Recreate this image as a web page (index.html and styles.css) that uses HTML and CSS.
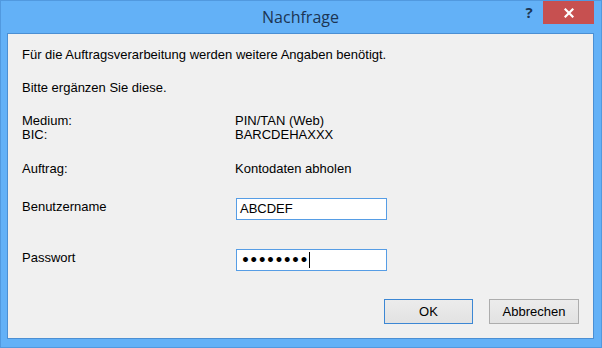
FILE: index.html
```html
<!DOCTYPE html>
<html lang="de">
<head>
<meta charset="utf-8">
<title>Nachfrage</title>
<link rel="stylesheet" href="styles.css">
</head>
<body>
<div class="window">
  <div class="titlebar">
    <div class="spacer"></div>
    <div class="title">Nachfrage</div>
    <div class="controls">
      <div class="help">?</div>
      <div class="close">
        <svg width="10" height="10" viewBox="0 0 10 10"><path d="M1.5 1.5 L8.5 8.5 M8.5 1.5 L1.5 8.5" stroke="#fff" stroke-width="2.2" stroke-linecap="square"/></svg>
      </div>
    </div>
  </div>
  <div class="client">
    <p class="line">Für die Auftragsverarbeitung werden weitere Angaben benötigt.</p>
    <p class="line gap">Bitte ergänzen Sie diese.</p>
    <div class="info gap">
      <span>Medium:</span><span>PIN/TAN (Web)</span>
      <span>BIC:</span><span>BARCDEHAXXX</span>
    </div>
    <div class="info gap2">
      <span>Auftrag:</span><span>Kontodaten abholen</span>
    </div>
    <div class="field first">
      <span class="label">Benutzername</span>
      <div class="input">ABCDEF</div>
    </div>
    <div class="field second">
      <span class="label">Passwort</span>
      <div class="input pw"><span class="dots">••••••••</span><span class="caret"></span></div>
    </div>
    <div class="buttons">
      <div class="btn default">OK</div>
      <div class="btn cancel">Abbrechen</div>
    </div>
  </div>
</div>
</body>
</html>
```
FILE: styles.css
```css
* { box-sizing: border-box; }
html, body { margin: 0; padding: 0; }
body {
  width: 602px;
  height: 348px;
  overflow: hidden;
  font-family: "Liberation Sans", Arial, sans-serif;
  font-size: 13px;
  color: #000;
}
.window {
  width: 602px;
  height: 348px;
  background: #63b1f7;
  border: 1px solid #5199df;
  display: flex;
  flex-direction: column;
}
.titlebar {
  height: 32px;
  display: grid;
  grid-template-columns: 1fr auto 1fr;
  padding-right: 7px;
}
.title {
  font-family: "Open Sans", "Noto Sans", sans-serif;
  font-size: 16px;
  color: #1c3553;
  padding-top: 5px;
  line-height: 22px;
  padding-left: 6px;
}
.controls {
  display: flex;
  justify-content: flex-end;
  align-items: flex-start;
}
.help {
  width: 30px;
  height: 23px;
  font-family: "Open Sans", "Noto Sans", sans-serif;
  font-weight: bold;
  font-size: 15px;
  line-height: 23px;
  color: #1c3553;
  text-align: center;
  padding-left: 2px;
}
.close {
  width: 51px;
  height: 23px;
  background: #c75050;
  display: flex;
  align-items: center;
  justify-content: center;
}
.client {
  flex: 1;
  margin: 0 7px 8px 6px;
  border: 1px solid #4b8fd3;
  background: #f0f0f0;
  padding: 14px 14px 0 14px;
  display: flex;
  flex-direction: column;
}
.line {
  margin: 0;
  line-height: 14px;
}
.gap { margin-top: 19px; }
.gap2 { margin-top: 20px; }
.info {
  display: grid;
  grid-template-columns: 213px 1fr;
  line-height: 14px;
}
.field {
  display: grid;
  grid-template-columns: 214px 151px;
  height: 22px;
}
.field.first { margin-top: 22px; }
.field.second { margin-top: 29px; }
.label {
  line-height: 14px;
  padding-top: 2px;
}
.input {
  height: 22px;
  border: 1px solid #569de5;
  background: #fff;
  padding-left: 3px;
  line-height: 20px;
  display: flex;
  align-items: center;
}
.pw { padding-left: 4px; }
.dots {
  font-family: "DejaVu Sans", sans-serif;
  font-size: 14px;
  font-weight: bold;
  letter-spacing: -0.6px;
}
.caret {
  width: 1px;
  height: 16px;
  background: #000;
  margin-left: 1px;
}
.buttons {
  margin-top: 28px;
  display: flex;
  justify-content: flex-end;
  gap: 16px;
}
.btn {
  height: 25px;
  line-height: 23px;
  text-align: center;
  border: 1px solid #adadad;
  background: linear-gradient(#ececec, #e2e2e2);
}
.btn.default {
  width: 89px;
  border-color: #3c87d4;
}
.btn.cancel { width: 90px; }
```
